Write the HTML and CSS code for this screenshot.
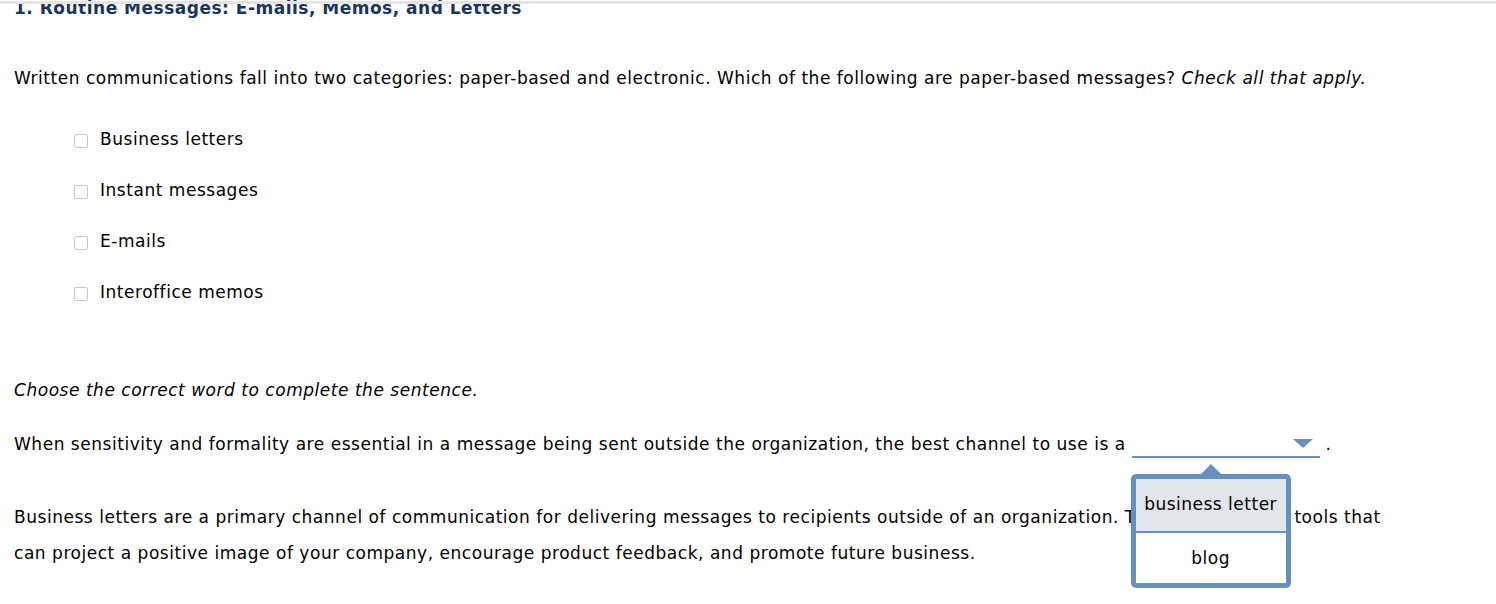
FILE: index.html
```html
<!DOCTYPE html>
<html>
<head>
<meta charset="utf-8">
<link rel="stylesheet" href="styles.css">
</head>
<body>
<div class="topbar"></div>
<div class="page">
  <h1 class="title">1. Routine Messages: E-mails, Memos, and Letters</h1>
  <p class="prompt">Written communications fall into two categories: paper-based and electronic. Which of the following are paper-based messages? <em>Check all that apply.</em></p>
  <ul class="choices">
    <li class="choice"><span class="box"></span><span>Business letters</span></li>
    <li class="choice"><span class="box"></span><span>Instant messages</span></li>
    <li class="choice"><span class="box"></span><span>E-mails</span></li>
    <li class="choice"><span class="box"></span><span>Interoffice memos</span></li>
  </ul>
  <p class="instruction"><em>Choose the correct word to complete the sentence.</em></p>
  <p class="sentence">When sensitivity and formality are essential in a message being sent outside the organization, the best channel to use is a <span class="select"><span class="caret"></span><span class="menu"><span class="opt active">business letter</span><span class="opt">blog</span></span></span> .</p>
  <p class="explain">Business letters are a primary channel of communication for delivering messages to recipients outside of an organization. They are effective tools that can project a positive image of your company, encourage product feedback, and promote future business.</p>
</div>
</body>
</html>
```
FILE: styles.css
```css
html, body {
  margin: 0;
  padding: 0;
  background: #fff;
}
body {
  font-family: "DejaVu Sans", Verdana, sans-serif;
  font-size: 17px;
  letter-spacing: 0.53px;
  color: #000;
}
.topbar {
  position: fixed;
  top: 1px;
  left: 0;
  right: 0;
  height: 3px;
  background: #e4e4e4;
  z-index: 5;
}
.page {
  padding: 0 14px 34px 14px;
  max-width: 1392px;
}
.title {
  margin: -2px 0 0 0;
  font-size: 17px;
  font-weight: bold;
  color: #17365d;
  line-height: 20px;
  letter-spacing: 0.5px;
}
.prompt {
  margin: 48px 0 0 0;
  line-height: 24px;
}
.choices {
  list-style: none;
  margin: 37px 0 0 0;
  padding: 0 0 0 60px;
}
.choice {
  display: flex;
  align-items: center;
  height: 24px;
  margin-bottom: 27px;
}
.box {
  width: 12px;
  height: 12px;
  border: 1px solid #c8c8c8;
  border-radius: 2px;
  margin: 3px 12px 0 0;
  background: #fff;
}
.instruction {
  margin: 74px 0 0 0;
  line-height: 24px;
}
.sentence {
  margin: 30px 0 0 0;
  line-height: 24px;
}
.select {
  position: relative;
  display: inline-block;
  width: 188px;
  height: 22px;
  border-bottom: 2px solid #6591c2;
  vertical-align: -8px;
  letter-spacing: 0;
}
.caret {
  position: absolute;
  right: 7px;
  top: 5px;
  width: 0;
  height: 0;
  border-left: 10px solid transparent;
  border-right: 10px solid transparent;
  border-top: 9px solid #6591c2;
}
.menu {
  position: absolute;
  left: -1px;
  top: 40px;
  width: 150px;
  border: 5px solid #6591c2;
  border-radius: 5px;
  background: #fff;
  display: flex;
  flex-direction: column;
  z-index: 3;
}
.menu::before {
  content: "";
  position: absolute;
  left: 65px;
  top: -15px;
  border-left: 10px solid transparent;
  border-right: 10px solid transparent;
  border-bottom: 10px solid #6591c2;
}
.opt {
  height: 50px;
  display: flex;
  align-items: center;
  justify-content: center;
  font-size: 17px;
  line-height: 20px;
  letter-spacing: 0.5px;
}
.opt.active {
  background: #e0e6ea;
  border-bottom: 2px solid #6591c2;
  box-sizing: border-box;
  height: 54px;
  padding-bottom: 2px;
}
.explain {
  margin: 41px 0 0 0;
  line-height: 36px;
}
```
